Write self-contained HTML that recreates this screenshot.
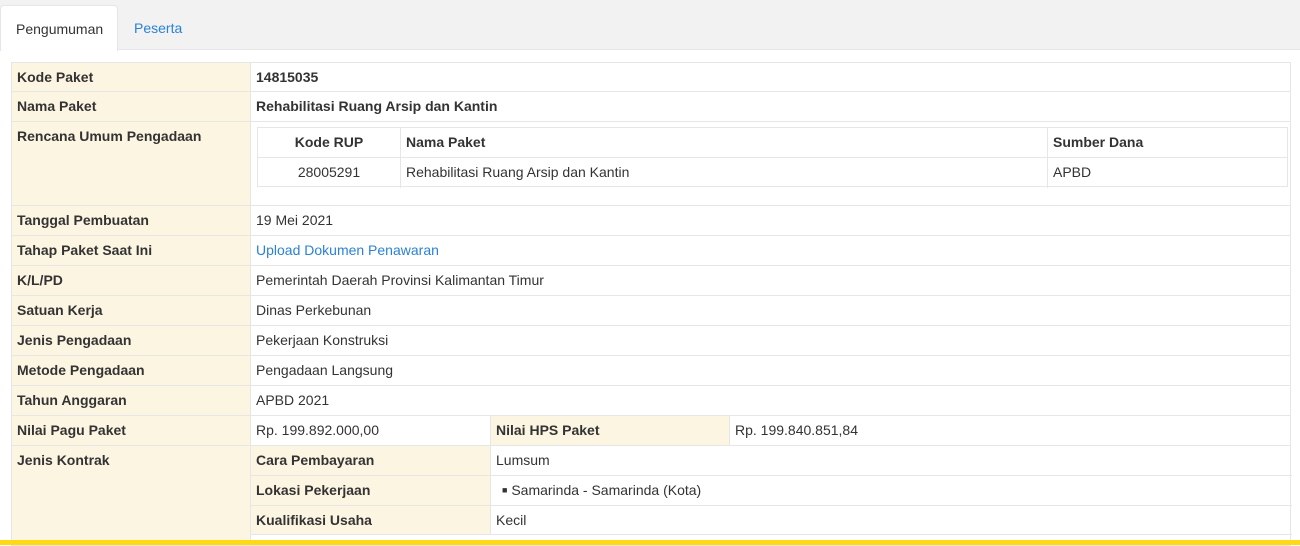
<!DOCTYPE html>
<html><head><style>
*{margin:0;padding:0;box-sizing:border-box}
body{width:1300px;height:545px;overflow:hidden;background:#fff;font-family:"Liberation Sans",Arial,sans-serif;font-size:14px;color:#333;position:relative}
.tabs{position:absolute;left:0;top:0;width:1300px;height:50px;background:#f2f2f2;border-bottom:1px solid #e6e6e6}
.tab{position:absolute;top:5px;height:46px;line-height:46px;padding:0 15px}
.t1{left:0;width:118px;background:#fff;border:1px solid #e6e6e6;border-bottom:none;border-radius:4px 4px 0 0}
.t2{left:119px;color:#2a82d6}
.r{position:absolute;left:11px;width:1280px;border:1px solid #e6e6e6;border-top:none}
.lab{position:absolute;left:0;top:0;bottom:0;width:239px;background:#fcf5e2;font-weight:bold;padding:6px 5px;border-right:1px solid #e6e6e6}
.val{position:absolute;left:239px;top:0;padding:6px 5px}
.c{position:absolute;top:0;bottom:0;padding:6px 5px;border-right:1px solid #e6e6e6}
.y{background:#fcf5e2;font-weight:bold}
.inner{position:absolute;left:245px;top:5px;width:1031px;height:60px;border:1px solid #e6e6e6}
.inner div{position:absolute;height:30px;padding:6px 5px;border-right:1px solid #e6e6e6}
a{color:#2a82d6;text-decoration:none}
</style></head><body>
<div class="tabs"><div class="tab t1">Pengumuman</div><div class="tab t2">Peserta</div></div>
<div class="r" style="top:62px;height:30px;border-top:1px solid #e6e6e6"><div class="lab">Kode Paket</div><div class="val" style="font-weight:bold">14815035</div></div>
<div class="r" style="top:92px;height:30px"><div class="lab">Nama Paket</div><div class="val" style="font-weight:bold">Rehabilitasi Ruang Arsip dan Kantin</div></div>
<div class="r" style="top:122px;height:84px"><div class="lab">Rencana Umum Pengadaan</div>
<div class="inner">
<div style="left:0;top:0;width:143px;text-align:center;font-weight:bold;border-bottom:1px solid #e6e6e6">Kode RUP</div>
<div style="left:143px;top:0;width:647px;font-weight:bold;border-bottom:1px solid #e6e6e6">Nama Paket</div>
<div style="left:790px;top:0;width:239px;font-weight:bold;border-bottom:1px solid #e6e6e6;border-right:none">Sumber Dana</div>
<div style="left:0;top:30px;width:143px;text-align:center">28005291</div>
<div style="left:143px;top:30px;width:647px">Rehabilitasi Ruang Arsip dan Kantin</div>
<div style="left:790px;top:30px;width:239px;border-right:none">APBD</div>
</div></div>
<div class="r" style="top:206px;height:30px"><div class="lab">Tanggal Pembuatan</div><div class="val">19 Mei 2021</div></div>
<div class="r" style="top:236px;height:30px"><div class="lab">Tahap Paket Saat Ini</div><div class="val"><a>Upload Dokumen Penawaran</a></div></div>
<div class="r" style="top:266px;height:30px"><div class="lab">K/L/PD</div><div class="val">Pemerintah Daerah Provinsi Kalimantan Timur</div></div>
<div class="r" style="top:296px;height:30px"><div class="lab">Satuan Kerja</div><div class="val">Dinas Perkebunan</div></div>
<div class="r" style="top:326px;height:30px"><div class="lab">Jenis Pengadaan</div><div class="val">Pekerjaan Konstruksi</div></div>
<div class="r" style="top:356px;height:30px"><div class="lab">Metode Pengadaan</div><div class="val">Pengadaan Langsung</div></div>
<div class="r" style="top:386px;height:30px"><div class="lab">Tahun Anggaran</div><div class="val">APBD 2021</div></div>
<div class="r" style="top:416px;height:30px"><div class="lab">Nilai Pagu Paket</div>
<div class="c" style="left:239px;width:240px">Rp. 199.892.000,00</div>
<div class="c y" style="left:479px;width:239px">Nilai HPS Paket</div>
<div class="c" style="left:718px;border:none">Rp. 199.840.851,84</div></div>
<div class="r" style="top:446px;height:100px"><div class="lab">Jenis Kontrak</div>
<div class="c y" style="left:239px;width:240px;height:30px;border-bottom:1px solid #e6e6e6">Cara Pembayaran</div>
<div class="c" style="left:479px;width:801px;height:30px;border:none;border-bottom:1px solid #e6e6e6">Lumsum</div>
<div class="c y" style="left:239px;top:30px;width:240px;height:30px;border-bottom:1px solid #e6e6e6">Lokasi Pekerjaan</div>
<div class="c" style="left:479px;top:30px;width:801px;height:30px;border:none;border-bottom:1px solid #e6e6e6;padding-left:11px"><span style="font-size:9px;vertical-align:2px">■</span> Samarinda - Samarinda (Kota)</div>
<div class="c y" style="left:239px;top:60px;width:240px;height:29px;border-bottom:1px solid #e6e6e6">Kualifikasi Usaha</div>
<div class="c" style="left:479px;top:60px;width:801px;height:29px;border:none;border-bottom:1px solid #e6e6e6">Kecil</div>
</div>
<div style="position:absolute;left:0;top:540px;width:1300px;height:5px;background:#ffd915"></div>
</body></html>
